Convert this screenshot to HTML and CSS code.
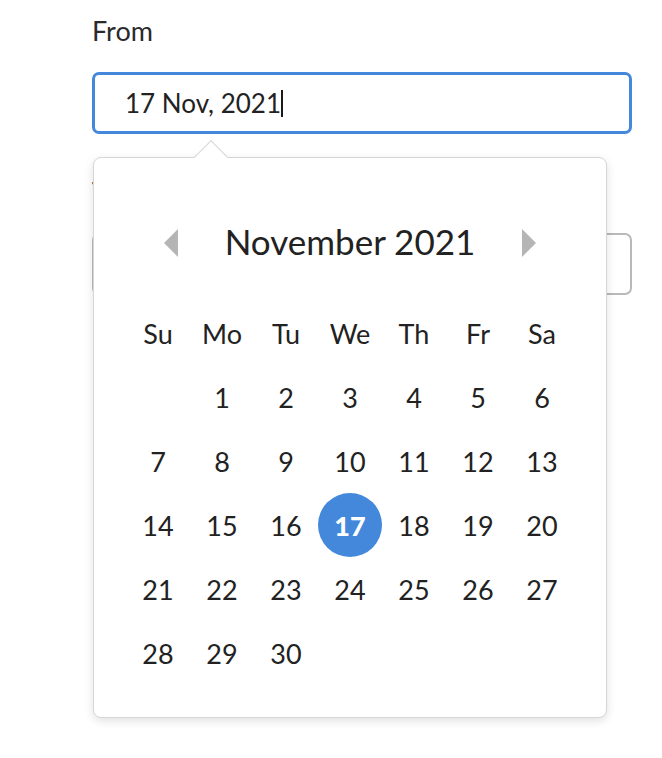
FILE: index.html
```html
<!DOCTYPE html>
<html>
<head>
<meta charset="utf-8">
<link rel="stylesheet" href="styles.css">
</head>
<body>
<div class="form">
  <div class="field">
    <div class="label">From</div>
    <div class="input focused"><span class="value">17 Nov, 2021</span><span class="caret"></span></div>
  </div>
  <div class="field second">
    <div class="label">To</div>
    <div class="input"></div>
  </div>

  <div class="popup">
    <div class="pointer"></div>
    <div class="cal-head">
      <svg class="nav" width="14" height="28" viewBox="0 0 14 28"><polygon points="14,0 14,28 0,14" fill="#b5b5b5"/></svg>
      <div class="month">November 2021</div>
      <svg class="nav" width="14" height="28" viewBox="0 0 14 28"><polygon points="0,0 0,28 14,14" fill="#b5b5b5"/></svg>
    </div>
    <div class="grid">
      <div class="cell">Su</div><div class="cell">Mo</div><div class="cell">Tu</div><div class="cell">We</div><div class="cell">Th</div><div class="cell">Fr</div><div class="cell">Sa</div>
      <div class="cell"></div><div class="cell">1</div><div class="cell">2</div><div class="cell">3</div><div class="cell">4</div><div class="cell">5</div><div class="cell">6</div>
      <div class="cell">7</div><div class="cell">8</div><div class="cell">9</div><div class="cell">10</div><div class="cell">11</div><div class="cell">12</div><div class="cell">13</div>
      <div class="cell">14</div><div class="cell">15</div><div class="cell">16</div><div class="cell selected">17</div><div class="cell">18</div><div class="cell">19</div><div class="cell">20</div>
      <div class="cell">21</div><div class="cell">22</div><div class="cell">23</div><div class="cell">24</div><div class="cell">25</div><div class="cell">26</div><div class="cell">27</div>
      <div class="cell">28</div><div class="cell">29</div><div class="cell">30</div>
    </div>
  </div>
</div>
</body>
</html>
```

FILE: styles.css
```css
html, body {
  margin: 0;
  padding: 0;
  background: #ffffff;
}

body {
  font-family: Lato, "Noto Sans", sans-serif;
  color: #262626;
  min-height: 758px;
}

.form {
  position: relative;
  width: 540px;
  min-height: 758px;
  margin-left: 92px;
  padding-top: 14px;
  box-sizing: border-box;
}

.label {
  font-size: 27px;
  line-height: 34px;
  color: #2a2a2a;
  height: 34px;
}

.field .input {
  margin-top: 24px;
}

.input {
  box-sizing: border-box;
  height: 62px;
  border: 2px solid #b9b9b9;
  border-radius: 7px;
  display: flex;
  align-items: center;
  padding-left: 31px;
  font-size: 26px;
}

.input.focused {
  border: 3px solid #4488dc;
  padding-left: 30px;
}

.value {
  color: #222222;
}

.caret {
  display: inline-block;
  width: 2px;
  height: 27px;
  background: #1a1a1a;
  margin-left: 0;
}

.second {
  margin-top: 41px;
}

.popup {
  position: absolute;
  left: 1px;
  top: 157px;
  width: 514px;
  box-sizing: border-box;
  border: 1px solid #d6d6d6;
  border-radius: 8px;
  background: #ffffff;
  box-shadow: 0 3px 10px rgba(0, 0, 0, 0.12);
  padding: 51px 32px 32px;
}

.pointer {
  position: absolute;
  top: -13px;
  left: 105px;
  width: 24px;
  height: 24px;
  background: #ffffff;
  border-top: 1px solid #d6d6d6;
  border-left: 1px solid #d6d6d6;
  transform: rotate(45deg);
  box-sizing: border-box;
}

.cal-head {
  display: flex;
  align-items: center;
  justify-content: space-between;
  height: 64px;
  padding: 0 38px;
  margin-bottom: 28px;
}

.nav {
  display: block;
  margin-top: 4px;
}

.month {
  font-size: 35px;
  color: #222222;
}

.grid {
  display: grid;
  grid-template-columns: repeat(7, 64px);
  grid-auto-rows: 64px;
}

.cell {
  display: flex;
  align-items: center;
  justify-content: center;
  font-size: 27px;
  color: #222222;
}

.cell.selected {
  background: #4488dc;
  color: #ffffff;
  border-radius: 50%;
  font-weight: 900;
}
```
